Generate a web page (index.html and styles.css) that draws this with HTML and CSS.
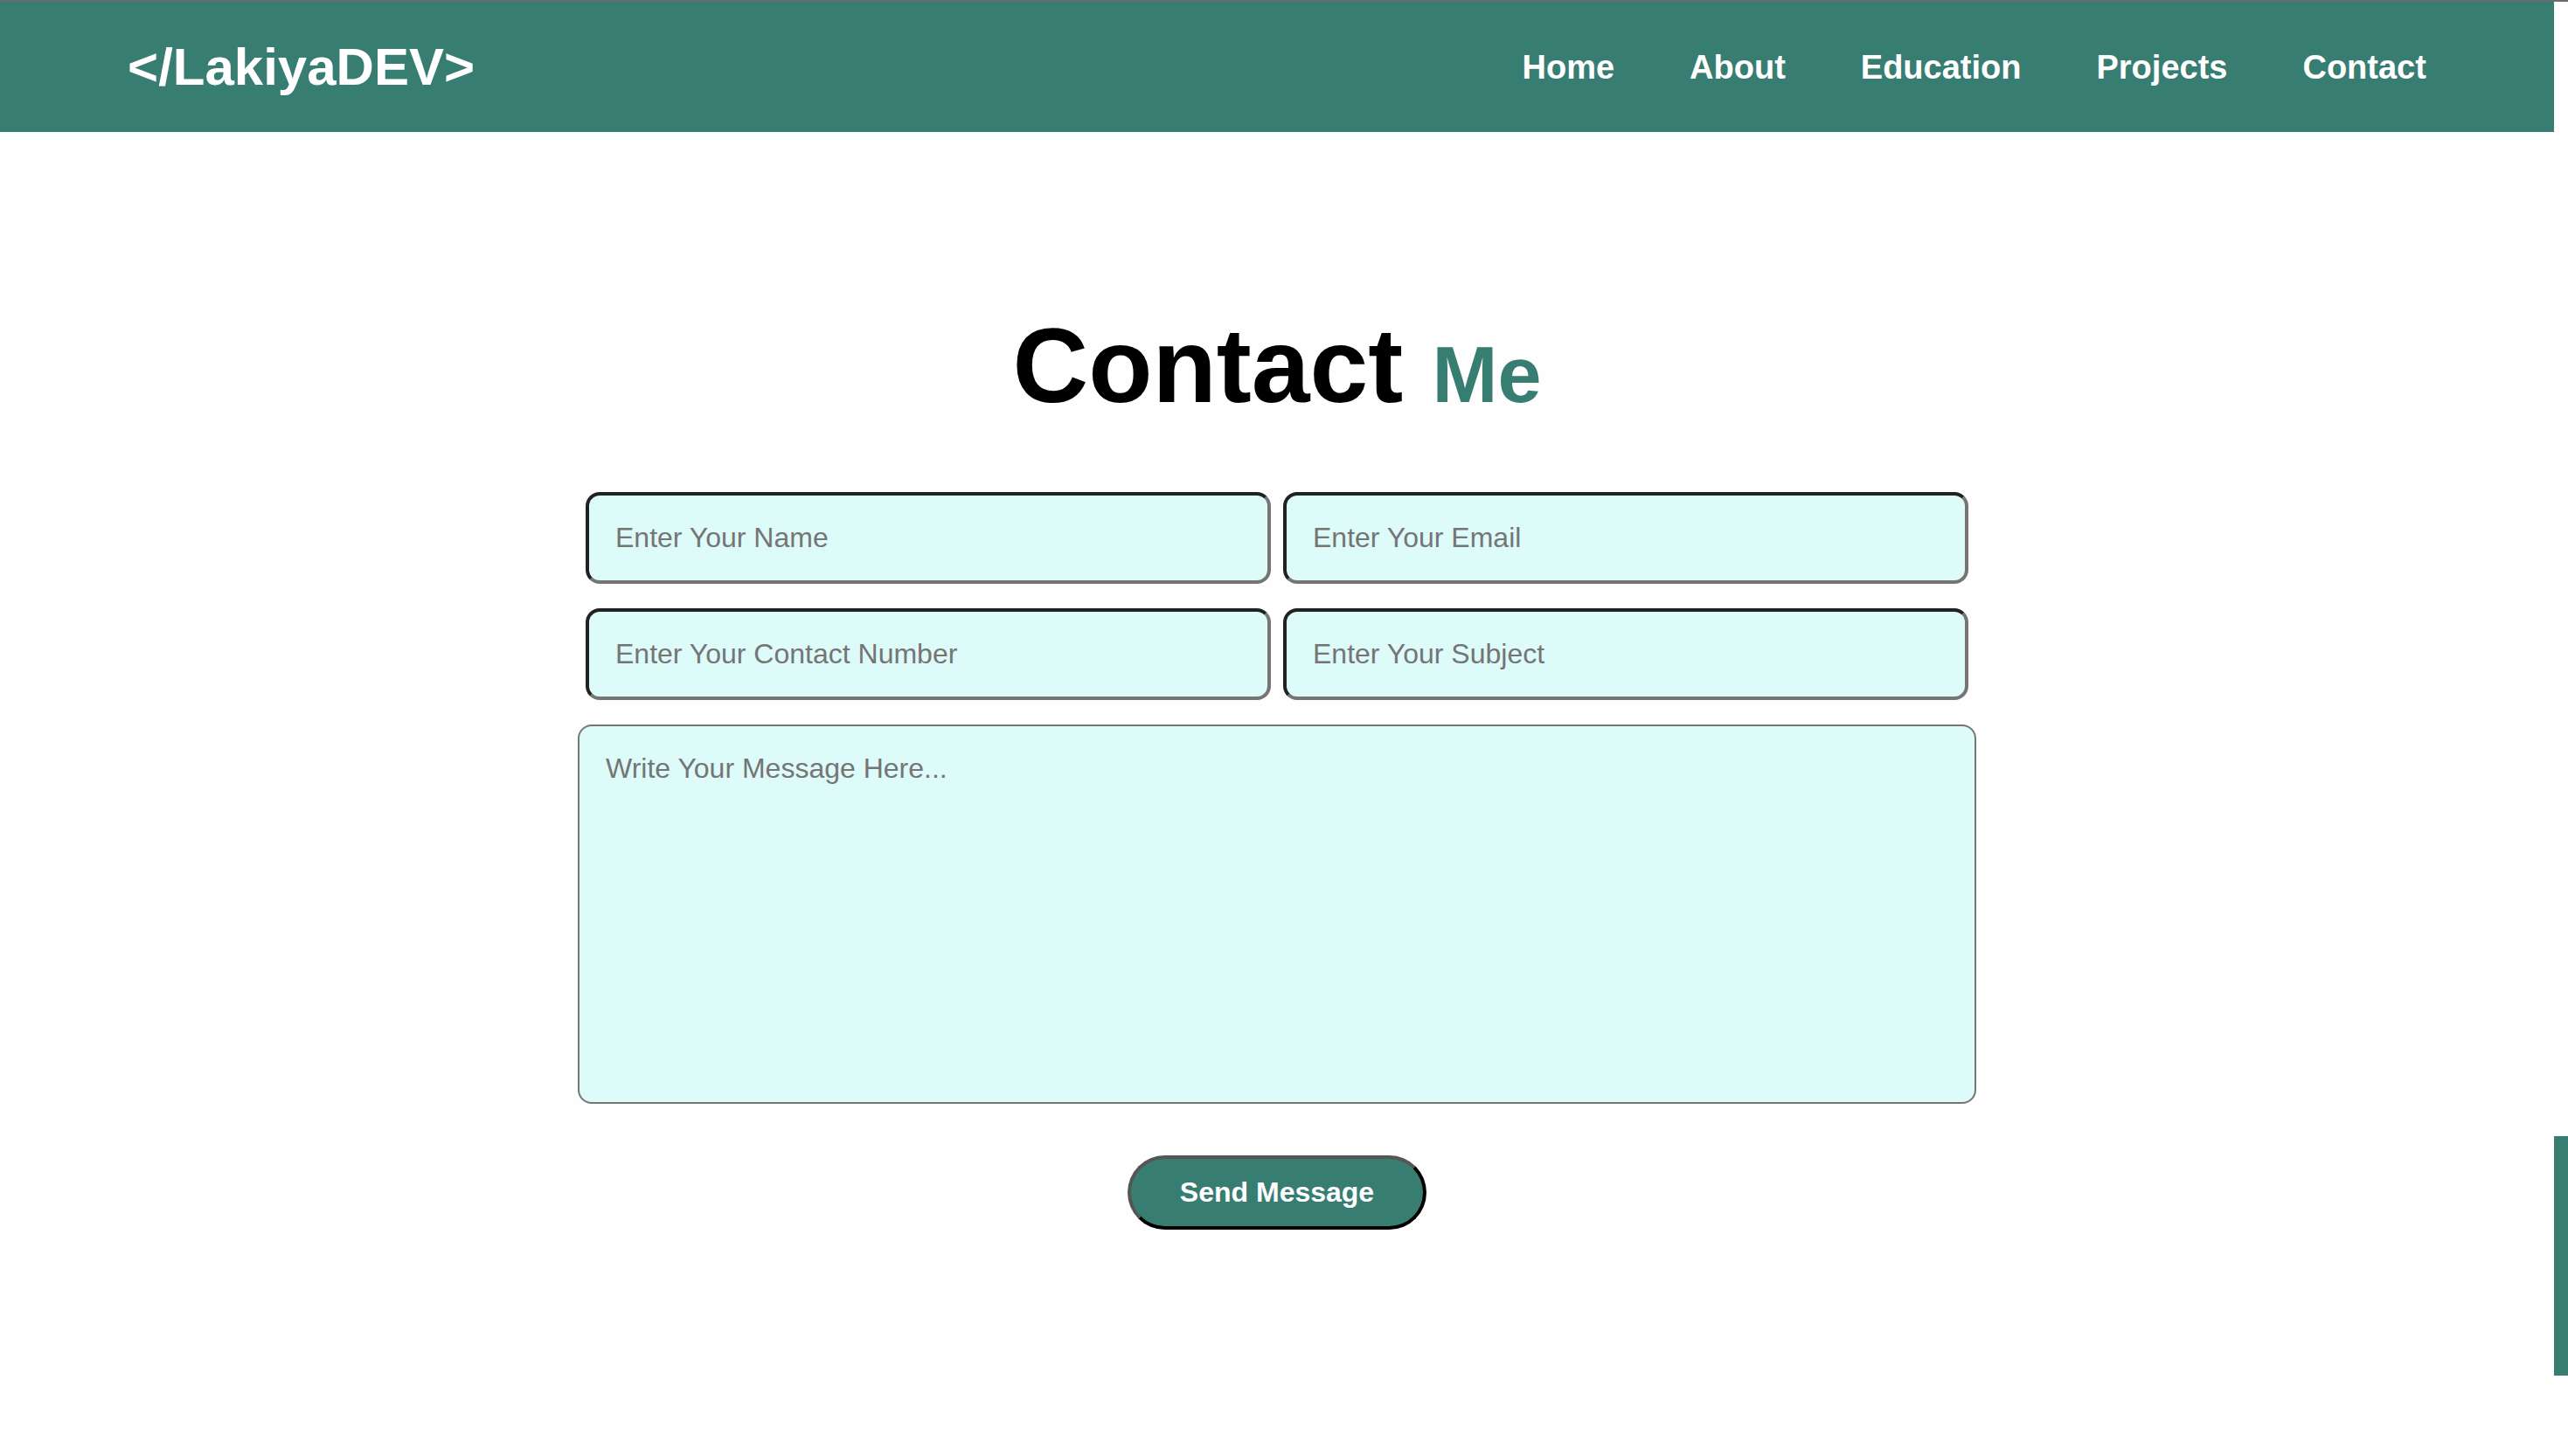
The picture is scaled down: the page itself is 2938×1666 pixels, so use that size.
FILE: index.html
```html
<!DOCTYPE html>
<html lang="en">
<head>
<meta charset="utf-8">
<meta name="viewport" content="width=device-width, initial-scale=1">
<title>LakiyaDEV - Contact</title>
<link rel="stylesheet" href="styles.css">
</head>
<body>
<div class="page">
  <header class="header">
    <a class="logo" href="#home">&lt;/LakiyaDEV&gt;</a>
    <nav class="navbar">
      <a href="#home">Home</a>
      <a href="#about">About</a>
      <a href="#education">Education</a>
      <a href="#projects">Projects</a>
      <a href="#contact">Contact</a>
    </nav>
  </header>
  <main class="contact" id="contact">
    <h1 class="heading">Contact <span>Me</span></h1>
    <form class="form">
      <div class="fields">
        <input class="field" type="text" placeholder="Enter Your Name" aria-label="Name">
        <input class="field" type="email" placeholder="Enter Your Email" aria-label="Email">
        <input class="field" type="tel" placeholder="Enter Your Contact Number" aria-label="Contact number">
        <input class="field" type="text" placeholder="Enter Your Subject" aria-label="Subject">
      </div>
      <textarea class="message" placeholder="Write Your Message Here..." aria-label="Message"></textarea>
      <button class="send" type="submit">Send Message</button>
    </form>
  </main>
</div>
<div class="scroll-track" aria-hidden="true"><div class="scroll-thumb"></div></div>
</body>
</html>
```
FILE: styles.css
```css
:root {
  --main: #387d71;
  --field: #dcfbf9;
  --edge: #757575;
  --rail: 16px;
}

* {
  box-sizing: border-box;
  margin: 0;
  padding: 0;
}

body {
  min-height: 100vh;
  border-top: 2px solid #6b6a74;
  background: #fefefe;
  font-family: Helvetica, "Liberation Sans", Arial, sans-serif;
}

.page {
  padding-right: var(--rail);
}

.header {
  display: flex;
  align-items: center;
  justify-content: space-between;
  padding: 40px 5%;
  background: var(--main);
}

.logo,
.navbar a {
  color: #fff;
  font-weight: 700;
  text-decoration: none;
}

.logo {
  font-size: 60px;
  line-height: 69px;
}

.navbar {
  display: flex;
  gap: 86px;
}

.navbar a {
  font-size: 38px;
  line-height: 44px;
}

.contact {
  padding: 198px 5% 160px;
}

.heading {
  margin-bottom: 65px;
  font-size: 120px;
  line-height: 138px;
  text-align: center;
}

.heading span {
  color: var(--main);
  font-size: 90px;
}

.form {
  display: flex;
  flex-direction: column;
  align-items: center;
  max-width: 1600px;
  margin: 0 auto;
}

.fields {
  display: grid;
  grid-template-columns: 1fr 1fr;
  gap: 28px 14px;
  width: 100%;
  margin-bottom: 28px;
  padding: 0 9px;
}

.field,
.message {
  width: 100%;
  padding: 30px;
  border-radius: 16px;
  background: var(--field);
  color: #000;
  font-family: inherit;
  font-size: 32px;
  line-height: 37px;
}

.field {
  border: 4px solid;
  border-color: #212121 var(--edge) var(--edge) #212121;
}

.message {
  display: block;
  height: 434px;
  border: 2px solid var(--edge);
  resize: none;
}

.field::placeholder,
.message::placeholder {
  color: var(--edge);
}

.send {
  margin-top: 59px;
  padding: 20px 56px;
  border: 4px solid;
  border-color: #555 #000 #000 #555;
  border-radius: 60px;
  background: var(--main);
  color: #fff;
  font-family: inherit;
  font-size: 32px;
  font-weight: 700;
  line-height: 37px;
}

.scroll-track {
  position: fixed;
  top: 2px;
  right: 0;
  bottom: 0;
  display: grid;
  grid-template-rows: 1298fr 274fr 92fr;
  width: var(--rail);
}

.scroll-thumb {
  grid-row: 2;
  background: var(--main);
}
```
